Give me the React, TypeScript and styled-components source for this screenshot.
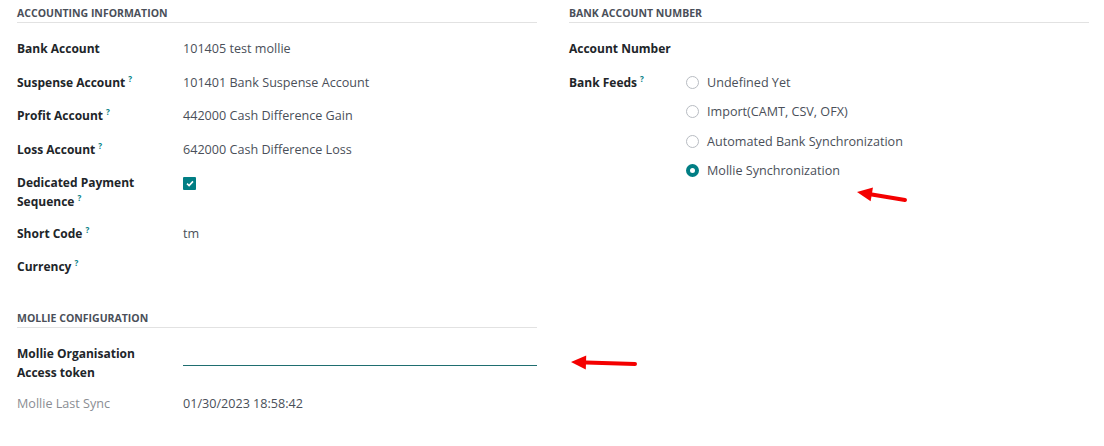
import React, { FunctionComponent, ReactNode } from "react"
import styled, { createGlobalStyle } from "styled-components"

const GlobalStyle = createGlobalStyle`
  html, body {
    margin: 0;
    background: #ffffff;
  }
  body {
    font-family: "Open Sans", "Noto Sans", sans-serif;
    font-size: 12.6px;
    color: #212529;
  }
`

const Page = styled.div`
  position: relative;
  width: 1104px;
  height: 446px;
  box-sizing: border-box;
  padding: 0 15px 0 17px;
  display: grid;
  grid-template-columns: 520px 520px;
  column-gap: 32px;
  align-items: start;
`

const Column = styled.div`
  display: flex;
  flex-direction: column;
`

const Group = styled.section<{ $gapTop?: number }>`
  margin-top: ${(p) => p.$gapTop ?? 0}px;
`

const GroupTitle = styled.h3`
  margin: 4px 0 16px;
  font-size: 10.5px;
  line-height: 18px;
  font-weight: 700;
  text-transform: uppercase;
  color: #4a4f59;
  border-bottom: 1px solid #e2e2e2;
`

const Row = styled.div<{ $labelWidth: number; $pad: number }>`
  display: grid;
  grid-template-columns: ${(p) => p.$labelWidth}px 1fr;
  padding-bottom: ${(p) => p.$pad}px;
  line-height: 19px;
`

const Label = styled.div<{ $muted?: boolean }>`
  font-size: ${(p) => (p.$muted ? 12.6 : 12)}px;
  font-weight: ${(p) => (p.$muted ? 400 : 700)};
  color: ${(p) => (p.$muted ? "#8a8d93" : "#212529")};
  white-space: nowrap;
`

const Help = styled.sup`
  position: relative;
  top: -5px;
  line-height: 0;
  vertical-align: baseline;
  color: #017e84;
  font-size: 8px;
  font-weight: 700;
  margin-left: 3px;
`

const Value = styled.div`
  color: #4a4f59;
`

const Check = styled.span`
  display: inline-flex;
  align-items: center;
  justify-content: center;
  width: 13px;
  height: 13px;
  margin-top: 4px;
  border-radius: 1px;
  background: #017e84;
  vertical-align: top;
`

const TokenInput = styled.div`
  height: 21px;
  border-bottom: 1px solid #1f6e70;
`

const RadioList = styled.div`
  display: flex;
  flex-direction: column;
  gap: 10.5px;
  padding-left: 1px;
`

const RadioItem = styled.label`
  display: flex;
  align-items: center;
  gap: 8px;
  color: #4a4f59;
  line-height: 19px;
`

const RadioDot = styled.span<{ $checked?: boolean }>`
  width: 13px;
  height: 13px;
  border-radius: 50%;
  box-sizing: border-box;
  border: ${(p) => (p.$checked ? "4px solid #017e84" : "1px solid #b8bcc2")};
  background: #ffffff;
`

const Arrow = styled.svg`
  position: absolute;
  left: 0;
  top: 0;
  overflow: visible;
`

const Field: FunctionComponent<{
  label: ReactNode
  help?: boolean
  muted?: boolean
  width?: number
  pad?: number
  children?: ReactNode
}> = ({ label, help, muted, width = 166, pad = 14.5, children }) => (
  <Row $labelWidth={width} $pad={pad}>
    <Label $muted={muted}>
      {label}
      {help && <Help>?</Help>}
    </Label>
    <Value>{children}</Value>
  </Row>
)

const feeds = [
  "Undefined Yet",
  "Import(CAMT, CSV, OFX)",
  "Automated Bank Synchronization",
  "Mollie Synchronization",
]

// red hand-drawn pointer, tail (x1,y1) -> tip (x2,y2)
const RedArrow: FunctionComponent<{
  x1: number
  y1: number
  x2: number
  y2: number
}> = ({ x1, y1, x2, y2 }) => {
  const ang = Math.atan2(y1 - y2, x1 - x2)
  const len = 15
  const half = 7
  const bx = x2 + Math.cos(ang) * len
  const by = y2 + Math.sin(ang) * len
  const px = -Math.sin(ang) * half
  const py = Math.cos(ang) * half
  return (
    <Arrow width="1" height="1">
      <line
        x1={x1}
        y1={y1}
        x2={bx}
        y2={by}
        stroke="#f40000"
        strokeWidth="4"
        strokeLinecap="round"
      />
      <polygon
        points={`${x2},${y2} ${bx + px},${by + py} ${bx - px},${by - py}`}
        fill="#f40000"
      />
    </Arrow>
  )
}

export default function App() {
  return (
    <>
      <GlobalStyle />
      <Page>
        <Column>
          <Group>
            <GroupTitle>Accounting Information</GroupTitle>
            <Field label="Bank Account">101405 test mollie</Field>
            <Field label="Suspense Account" help>
              101401 Bank Suspense Account
            </Field>
            <Field label="Profit Account" help>
              442000 Cash Difference Gain
            </Field>
            <Field label="Loss Account" help>
              642000 Cash Difference Loss
            </Field>
            <Field
              label={
                <>
                  Dedicated Payment
                  <br />
                  Sequence
                </>
              }
              help
              pad={12.5}
            >
              <Check>
                <svg width="8" height="7" viewBox="0 0 8 7">
                  <path
                    d="M1 3.6 L3.1 5.6 L7 1.4"
                    fill="none"
                    stroke="#fff"
                    strokeWidth="1.6"
                  />
                </svg>
              </Check>
            </Field>
            <Field label="Short Code" help>
              tm
            </Field>
            <Field label="Currency" help />
          </Group>
          <Group $gapTop={14}>
            <GroupTitle>Mollie Configuration</GroupTitle>
            <Field
              label={
                <>
                  Mollie Organisation
                  <br />
                  Access token
                </>
              }
              pad={12}
            >
              <TokenInput />
            </Field>
            <Field label="Mollie Last Sync" muted>
              01/30/2023 18:58:42
            </Field>
          </Group>
        </Column>
        <Column>
          <Group>
            <GroupTitle>Bank Account Number</GroupTitle>
            <Field label="Account Number" width={116} />
            <Field label="Bank Feeds" help width={116}>
              <RadioList>
                {feeds.map((f, i) => (
                  <RadioItem key={f}>
                    <RadioDot $checked={i === feeds.length - 1} />
                    {f}
                  </RadioItem>
                ))}
              </RadioList>
            </Field>
          </Group>
        </Column>
        <RedArrow x1={905} y1={200} x2={857} y2={192} />
        <RedArrow x1={635} y1={364} x2={571} y2={362} />
      </Page>
    </>
  )
}
